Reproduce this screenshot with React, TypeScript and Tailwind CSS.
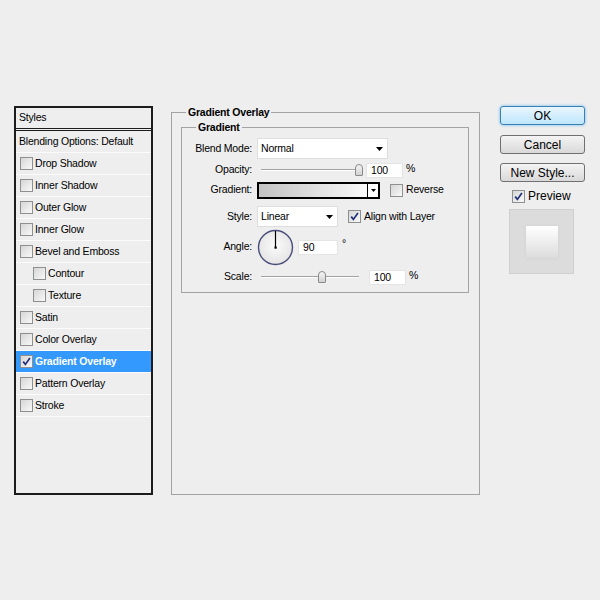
import React from "react";

const styleRows = [
  { label: "Drop Shadow" },
  { label: "Inner Shadow" },
  { label: "Outer Glow" },
  { label: "Inner Glow" },
  { label: "Bevel and Emboss" },
  { label: "Contour", sub: true },
  { label: "Texture", sub: true },
  { label: "Satin" },
  { label: "Color Overlay" },
  { label: "Gradient Overlay", active: true },
  { label: "Pattern Overlay" },
  { label: "Stroke" },
];

const Check = ({ checked = false }: { checked?: boolean }) => (
  <span className="flex h-[13px] w-[13px] shrink-0 items-center justify-center border border-[#8e8f8f] bg-linear-to-br from-[#d6d6d6] to-[#f9f9f9]">
    {checked && (
      <svg width="9" height="9" viewBox="0 0 9 9">
        <path d="M1.2 4.6 L3.4 7.4 L7.9 1" fill="none" stroke="#23307d" strokeWidth="1.7" />
      </svg>
    )}
  </span>
);

const Arrow = () => (
  <svg width="7" height="4" viewBox="0 0 7 4">
    <path d="M0 0 H7 L3.5 4 Z" fill="#000" />
  </svg>
);

const Slider = ({ pos }: { pos: number }) => (
  <div className="relative h-[12px] w-[98px]">
    <div className="absolute left-0 right-0 top-[5px] h-[2px] border-t border-[#a2a2a2] bg-white" />
    <div
      className="absolute top-0 h-[12px] w-[8px] rounded-t-[4px] rounded-b-[1px] border border-[#8a8a8a] bg-linear-to-b from-[#f6f6f6] to-[#d2d2d2]"
      style={{ left: pos }}
    />
  </div>
);

const NumBox = ({ value, w = 37 }: { value: string; w?: number }) => (
  <div
    className="flex h-[15px] items-center border border-[#e4e4e4] bg-white pl-[4px] leading-none"
    style={{ width: w }}
  >
    {value}
  </div>
);

const Row = ({ label, h, mt, children }: { label: string; h: number; mt: number; children: React.ReactNode }) => (
  <div className="flex items-center" style={{ height: h, marginTop: mt }}>
    <span className="w-[70px] text-right">{label}</span>
    <div className="ml-[5px] flex items-center">{children}</div>
  </div>
);

export default function App() {
  return (
    <div className="flex min-h-[600px] w-[600px] items-start bg-[#eeeeee] pl-[14px] pt-[106px] font-['Liberation_Sans',Arial,sans-serif] text-[10.5px] tracking-[-0.2px] text-black">
      {/* Styles list */}
      <div className="h-[389px] w-[139px] border-2 border-[#1c1c1c]">
        <div className="flex h-[23px] items-center border-b-[3px] border-double border-[#1c1c1c] pb-[1px] pl-[3px]">
          Styles
        </div>
        <div className="flex h-[22px] items-center border-b border-[#fbfbfb] pl-[3px]">
          Blending Options: Default
        </div>
        {styleRows.map((r) => (
          <div
            key={r.label}
            className={`flex h-[22px] items-center gap-[2px] border-b border-[#fbfbfb] ${r.sub ? "pl-[17px]" : "pl-[4px]"} ${
              r.active ? "bg-[#3399ff] font-bold text-white" : ""
            }`}
          >
            <Check checked={r.active} />
            <span>{r.label}</span>
          </div>
        ))}
      </div>

      {/* Gradient Overlay settings */}
      <fieldset className="ml-[18px] h-[389px] w-[309px] border border-[#a3a3a3]">
        <legend className="ml-[14px] px-[2px] font-bold leading-[12px]">Gradient Overlay</legend>
        <fieldset className="ml-[9px] mr-[10px] mt-[3px] h-[172px] border border-[#a3a3a3]">
          <legend className="ml-[14px] px-[2px] font-bold leading-[12px]">Gradient</legend>

          <Row label="Blend Mode:" h={21} mt={5}>
            <div className="flex h-[21px] w-[131px] items-center justify-between border border-[#dedede] bg-white pl-[3px] pr-[4px]">
              <span>Normal</span>
              <Arrow />
            </div>
          </Row>

          <Row label="Opacity:" h={20} mt={1}>
            <div className="ml-[4px]">
              <Slider pos={94} />
            </div>
            <div className="ml-[7px]">
              <NumBox value="100" />
            </div>
            <span className="ml-[3px] -mt-[3px]">%</span>
          </Row>

          <Row label="Gradient:" h={20} mt={0}>
            <div className="flex h-[17px] w-[123px] border-2 border-black">
              <div className="flex-1 bg-linear-to-r from-[#c3c3c3] to-[#fafafa]" />
              <div className="flex w-[11px] items-center justify-center border-l border-black bg-white">
                <svg width="5" height="3" viewBox="0 0 5 3">
                  <path d="M0 0 H5 L2.5 3 Z" fill="#000" />
                </svg>
              </div>
            </div>
            <div className="ml-[10px]">
              <Check />
            </div>
            <span className="ml-[3px]">Reverse</span>
          </Row>

          <Row label="Style:" h={25} mt={4}>
            <div className="flex h-[21px] w-[81px] items-center justify-between border border-[#dedede] bg-white pl-[3px] pr-[4px]">
              <span>Linear</span>
              <Arrow />
            </div>
            <div className="ml-[10px]">
              <Check checked />
            </div>
            <span className="ml-[3px]">Align with Layer</span>
          </Row>

          <Row label="Angle:" h={36} mt={0}>
            <svg width="37" height="37" viewBox="0 0 37 37">
              <defs>
                <radialGradient id="dial" cx="50%" cy="45%" r="60%">
                  <stop offset="0%" stopColor="#fbfbfb" />
                  <stop offset="100%" stopColor="#e2e2e2" />
                </radialGradient>
              </defs>
              <circle cx="18.5" cy="18.5" r="17" fill="url(#dial)" stroke="#4a4f7a" strokeWidth="1.4" />
              <line x1="18.5" y1="18.5" x2="18.5" y2="2" stroke="#000" strokeWidth="1.2" />
              <rect x="17.5" y="17.5" width="2.2" height="2.2" fill="#000" />
            </svg>
            <div className="ml-[4px]">
              <NumBox value="90" w={40} />
            </div>
            <span className="ml-[4px] -mt-[6px]">°</span>
          </Row>

          <Row label="Scale:" h={22} mt={1}>
            <div className="ml-[4px]">
              <Slider pos={57} />
            </div>
            <div className="ml-[10px]">
              <NumBox value="100" />
            </div>
            <span className="ml-[3px] -mt-[3px]">%</span>
          </Row>
        </fieldset>
      </fieldset>

      {/* Buttons */}
      <div className="ml-[20px] flex w-[85px] flex-col text-[12px] tracking-normal">
        <button className="flex h-[19px] items-center justify-center rounded-[3px] border border-[#3c7fb1] bg-linear-to-b from-[#eaf6fd] to-[#bee6fd] shadow-[0_0_3px_#5cb6f0]">
          OK
        </button>
        <button className="mt-[10px] flex h-[19px] items-center justify-center rounded-[3px] border border-[#707070] bg-linear-to-b from-[#f4f4f4] to-[#d9d9d9]">
          Cancel
        </button>
        <button className="mt-[9px] flex h-[19px] items-center justify-center rounded-[3px] border border-[#707070] bg-linear-to-b from-[#f4f4f4] to-[#d9d9d9]">
          New Style...
        </button>
        <div className="mt-[5px] flex items-center gap-[3px] pl-[12px]">
          <Check checked />
          <span>Preview</span>
        </div>
        <div className="ml-[9px] mt-[4px] flex h-[65px] w-[65px] items-start justify-center border border-[#cfcfcf] bg-[#dcdcdc] pt-[16px]">
          <div className="h-[32px] w-[32px] bg-linear-to-b from-[#ffffff] to-[#dcdcdc] shadow-[0_0_3px_#cfcfcf]" />
        </div>
      </div>
    </div>
  );
}
